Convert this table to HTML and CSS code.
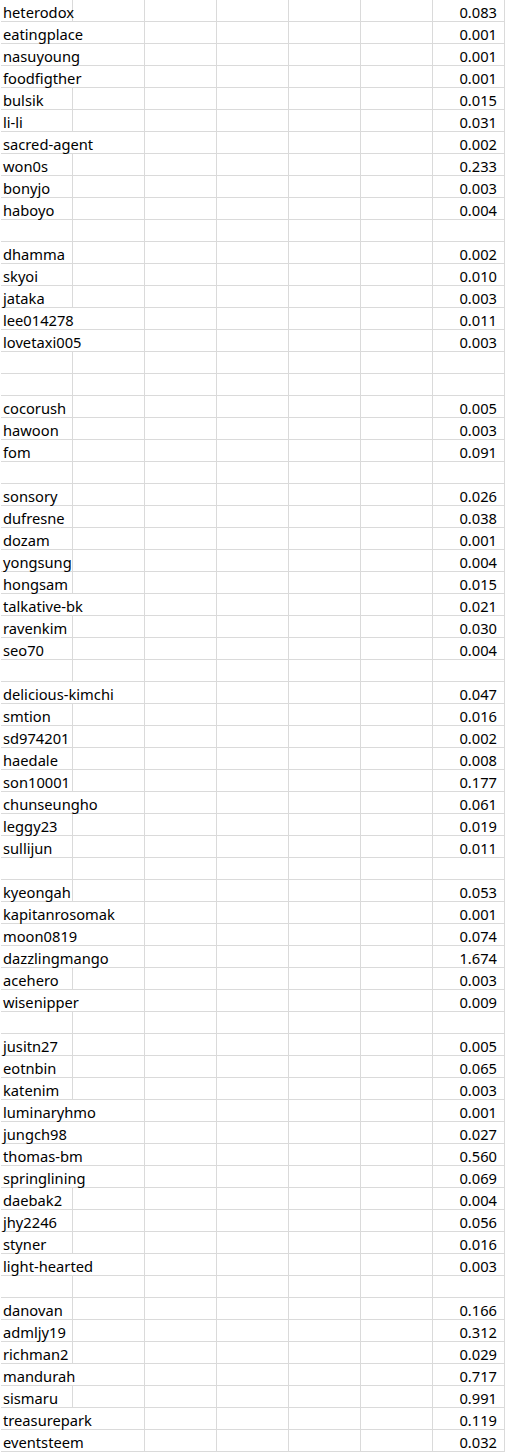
FILE: index.html
```html
<!DOCTYPE html>
<html>
<head>
<meta charset="utf-8">
<link rel="stylesheet" href="styles.css">
</head>
<body>
<div class="sheet">
<div class="row"><div class="c name">heterodox</div><div class="c"></div><div class="c"></div><div class="c"></div><div class="c"></div><div class="c"></div><div class="c num">0.083</div></div>
<div class="row"><div class="c name spill">eatingplace</div><div class="c"></div><div class="c"></div><div class="c"></div><div class="c"></div><div class="c num">0.001</div></div>
<div class="row"><div class="c name spill">nasuyoung</div><div class="c"></div><div class="c"></div><div class="c"></div><div class="c"></div><div class="c num">0.001</div></div>
<div class="row"><div class="c name spill">foodfigther</div><div class="c"></div><div class="c"></div><div class="c"></div><div class="c"></div><div class="c num">0.001</div></div>
<div class="row"><div class="c name">bulsik</div><div class="c"></div><div class="c"></div><div class="c"></div><div class="c"></div><div class="c"></div><div class="c num">0.015</div></div>
<div class="row"><div class="c name">li-li</div><div class="c"></div><div class="c"></div><div class="c"></div><div class="c"></div><div class="c"></div><div class="c num">0.031</div></div>
<div class="row"><div class="c name spill">sacred-agent</div><div class="c"></div><div class="c"></div><div class="c"></div><div class="c"></div><div class="c num">0.002</div></div>
<div class="row"><div class="c name">won0s</div><div class="c"></div><div class="c"></div><div class="c"></div><div class="c"></div><div class="c"></div><div class="c num">0.233</div></div>
<div class="row"><div class="c name">bonyjo</div><div class="c"></div><div class="c"></div><div class="c"></div><div class="c"></div><div class="c"></div><div class="c num">0.003</div></div>
<div class="row"><div class="c name">haboyo</div><div class="c"></div><div class="c"></div><div class="c"></div><div class="c"></div><div class="c"></div><div class="c num">0.004</div></div>
<div class="row"><div class="c"></div><div class="c"></div><div class="c"></div><div class="c"></div><div class="c"></div><div class="c"></div><div class="c"></div></div>
<div class="row"><div class="c name">dhamma</div><div class="c"></div><div class="c"></div><div class="c"></div><div class="c"></div><div class="c"></div><div class="c num">0.002</div></div>
<div class="row"><div class="c name">skyoi</div><div class="c"></div><div class="c"></div><div class="c"></div><div class="c"></div><div class="c"></div><div class="c num">0.010</div></div>
<div class="row"><div class="c name">jataka</div><div class="c"></div><div class="c"></div><div class="c"></div><div class="c"></div><div class="c"></div><div class="c num">0.003</div></div>
<div class="row"><div class="c name spill">lee014278</div><div class="c"></div><div class="c"></div><div class="c"></div><div class="c"></div><div class="c num">0.011</div></div>
<div class="row"><div class="c name spill">lovetaxi005</div><div class="c"></div><div class="c"></div><div class="c"></div><div class="c"></div><div class="c num">0.003</div></div>
<div class="row"><div class="c"></div><div class="c"></div><div class="c"></div><div class="c"></div><div class="c"></div><div class="c"></div><div class="c"></div></div>
<div class="row"><div class="c"></div><div class="c"></div><div class="c"></div><div class="c"></div><div class="c"></div><div class="c"></div><div class="c"></div></div>
<div class="row"><div class="c name">cocorush</div><div class="c"></div><div class="c"></div><div class="c"></div><div class="c"></div><div class="c"></div><div class="c num">0.005</div></div>
<div class="row"><div class="c name">hawoon</div><div class="c"></div><div class="c"></div><div class="c"></div><div class="c"></div><div class="c"></div><div class="c num">0.003</div></div>
<div class="row"><div class="c name">fom</div><div class="c"></div><div class="c"></div><div class="c"></div><div class="c"></div><div class="c"></div><div class="c num">0.091</div></div>
<div class="row"><div class="c"></div><div class="c"></div><div class="c"></div><div class="c"></div><div class="c"></div><div class="c"></div><div class="c"></div></div>
<div class="row"><div class="c name">sonsory</div><div class="c"></div><div class="c"></div><div class="c"></div><div class="c"></div><div class="c"></div><div class="c num">0.026</div></div>
<div class="row"><div class="c name">dufresne</div><div class="c"></div><div class="c"></div><div class="c"></div><div class="c"></div><div class="c"></div><div class="c num">0.038</div></div>
<div class="row"><div class="c name">dozam</div><div class="c"></div><div class="c"></div><div class="c"></div><div class="c"></div><div class="c"></div><div class="c num">0.001</div></div>
<div class="row"><div class="c name">yongsung</div><div class="c"></div><div class="c"></div><div class="c"></div><div class="c"></div><div class="c"></div><div class="c num">0.004</div></div>
<div class="row"><div class="c name">hongsam</div><div class="c"></div><div class="c"></div><div class="c"></div><div class="c"></div><div class="c"></div><div class="c num">0.015</div></div>
<div class="row"><div class="c name spill">talkative-bk</div><div class="c"></div><div class="c"></div><div class="c"></div><div class="c"></div><div class="c num">0.021</div></div>
<div class="row"><div class="c name">ravenkim</div><div class="c"></div><div class="c"></div><div class="c"></div><div class="c"></div><div class="c"></div><div class="c num">0.030</div></div>
<div class="row"><div class="c name">seo70</div><div class="c"></div><div class="c"></div><div class="c"></div><div class="c"></div><div class="c"></div><div class="c num">0.004</div></div>
<div class="row"><div class="c"></div><div class="c"></div><div class="c"></div><div class="c"></div><div class="c"></div><div class="c"></div><div class="c"></div></div>
<div class="row"><div class="c name spill">delicious-kimchi</div><div class="c"></div><div class="c"></div><div class="c"></div><div class="c"></div><div class="c num">0.047</div></div>
<div class="row"><div class="c name">smtion</div><div class="c"></div><div class="c"></div><div class="c"></div><div class="c"></div><div class="c"></div><div class="c num">0.016</div></div>
<div class="row"><div class="c name">sd974201</div><div class="c"></div><div class="c"></div><div class="c"></div><div class="c"></div><div class="c"></div><div class="c num">0.002</div></div>
<div class="row"><div class="c name">haedale</div><div class="c"></div><div class="c"></div><div class="c"></div><div class="c"></div><div class="c"></div><div class="c num">0.008</div></div>
<div class="row"><div class="c name">son10001</div><div class="c"></div><div class="c"></div><div class="c"></div><div class="c"></div><div class="c"></div><div class="c num">0.177</div></div>
<div class="row"><div class="c name spill">chunseungho</div><div class="c"></div><div class="c"></div><div class="c"></div><div class="c"></div><div class="c num">0.061</div></div>
<div class="row"><div class="c name">leggy23</div><div class="c"></div><div class="c"></div><div class="c"></div><div class="c"></div><div class="c"></div><div class="c num">0.019</div></div>
<div class="row"><div class="c name">sullijun</div><div class="c"></div><div class="c"></div><div class="c"></div><div class="c"></div><div class="c"></div><div class="c num">0.011</div></div>
<div class="row"><div class="c"></div><div class="c"></div><div class="c"></div><div class="c"></div><div class="c"></div><div class="c"></div><div class="c"></div></div>
<div class="row"><div class="c name">kyeongah</div><div class="c"></div><div class="c"></div><div class="c"></div><div class="c"></div><div class="c"></div><div class="c num">0.053</div></div>
<div class="row"><div class="c name spill">kapitanrosomak</div><div class="c"></div><div class="c"></div><div class="c"></div><div class="c"></div><div class="c num">0.001</div></div>
<div class="row"><div class="c name spill">moon0819</div><div class="c"></div><div class="c"></div><div class="c"></div><div class="c"></div><div class="c num">0.074</div></div>
<div class="row"><div class="c name spill">dazzlingmango</div><div class="c"></div><div class="c"></div><div class="c"></div><div class="c"></div><div class="c num">1.674</div></div>
<div class="row"><div class="c name">acehero</div><div class="c"></div><div class="c"></div><div class="c"></div><div class="c"></div><div class="c"></div><div class="c num">0.003</div></div>
<div class="row"><div class="c name spill">wisenipper</div><div class="c"></div><div class="c"></div><div class="c"></div><div class="c"></div><div class="c num">0.009</div></div>
<div class="row"><div class="c"></div><div class="c"></div><div class="c"></div><div class="c"></div><div class="c"></div><div class="c"></div><div class="c"></div></div>
<div class="row"><div class="c name">jusitn27</div><div class="c"></div><div class="c"></div><div class="c"></div><div class="c"></div><div class="c"></div><div class="c num">0.005</div></div>
<div class="row"><div class="c name">eotnbin</div><div class="c"></div><div class="c"></div><div class="c"></div><div class="c"></div><div class="c"></div><div class="c num">0.065</div></div>
<div class="row"><div class="c name">katenim</div><div class="c"></div><div class="c"></div><div class="c"></div><div class="c"></div><div class="c"></div><div class="c num">0.003</div></div>
<div class="row"><div class="c name spill">luminaryhmo</div><div class="c"></div><div class="c"></div><div class="c"></div><div class="c"></div><div class="c num">0.001</div></div>
<div class="row"><div class="c name spill">jungch98</div><div class="c"></div><div class="c"></div><div class="c"></div><div class="c"></div><div class="c num">0.027</div></div>
<div class="row"><div class="c name spill">thomas-bm</div><div class="c"></div><div class="c"></div><div class="c"></div><div class="c"></div><div class="c num">0.560</div></div>
<div class="row"><div class="c name spill">springlining</div><div class="c"></div><div class="c"></div><div class="c"></div><div class="c"></div><div class="c num">0.069</div></div>
<div class="row"><div class="c name">daebak2</div><div class="c"></div><div class="c"></div><div class="c"></div><div class="c"></div><div class="c"></div><div class="c num">0.004</div></div>
<div class="row"><div class="c name">jhy2246</div><div class="c"></div><div class="c"></div><div class="c"></div><div class="c"></div><div class="c"></div><div class="c num">0.056</div></div>
<div class="row"><div class="c name">styner</div><div class="c"></div><div class="c"></div><div class="c"></div><div class="c"></div><div class="c"></div><div class="c num">0.016</div></div>
<div class="row"><div class="c name spill">light-hearted</div><div class="c"></div><div class="c"></div><div class="c"></div><div class="c"></div><div class="c num">0.003</div></div>
<div class="row"><div class="c"></div><div class="c"></div><div class="c"></div><div class="c"></div><div class="c"></div><div class="c"></div><div class="c"></div></div>
<div class="row"><div class="c name">danovan</div><div class="c"></div><div class="c"></div><div class="c"></div><div class="c"></div><div class="c"></div><div class="c num">0.166</div></div>
<div class="row"><div class="c name">admljy19</div><div class="c"></div><div class="c"></div><div class="c"></div><div class="c"></div><div class="c"></div><div class="c num">0.312</div></div>
<div class="row"><div class="c name">richman2</div><div class="c"></div><div class="c"></div><div class="c"></div><div class="c"></div><div class="c"></div><div class="c num">0.029</div></div>
<div class="row"><div class="c name spill">mandurah</div><div class="c"></div><div class="c"></div><div class="c"></div><div class="c"></div><div class="c num">0.717</div></div>
<div class="row"><div class="c name">sismaru</div><div class="c"></div><div class="c"></div><div class="c"></div><div class="c"></div><div class="c"></div><div class="c num">0.991</div></div>
<div class="row"><div class="c name spill">treasurepark</div><div class="c"></div><div class="c"></div><div class="c"></div><div class="c"></div><div class="c num">0.119</div></div>
<div class="row"><div class="c name spill">eventsteem</div><div class="c"></div><div class="c"></div><div class="c"></div><div class="c"></div><div class="c num">0.032</div></div>
</div>
</body>
</html>
```

FILE: styles.css
```css
html, body {
  margin: 0;
  padding: 0;
  background: #ffffff;
}

.sheet {
  padding-left: 1px;
  font-family: "Noto Sans", "Open Sans", sans-serif;
  font-size: 14.7px;
  color: #000000;
}

.row {
  display: grid;
  grid-template-columns: repeat(7, 72px);
}

.c {
  box-sizing: border-box;
  height: 22px;
  padding-top: 1px;
  border-right: 1px solid #dadada;
  border-bottom: 1px solid #dadada;
  line-height: 22px;
  white-space: nowrap;
  overflow: visible;
}

.name {
  padding-left: 2px;
}

.spill {
  grid-column: span 2;
}

.num {
  text-align: right;
  padding-right: 7px;
}
```
